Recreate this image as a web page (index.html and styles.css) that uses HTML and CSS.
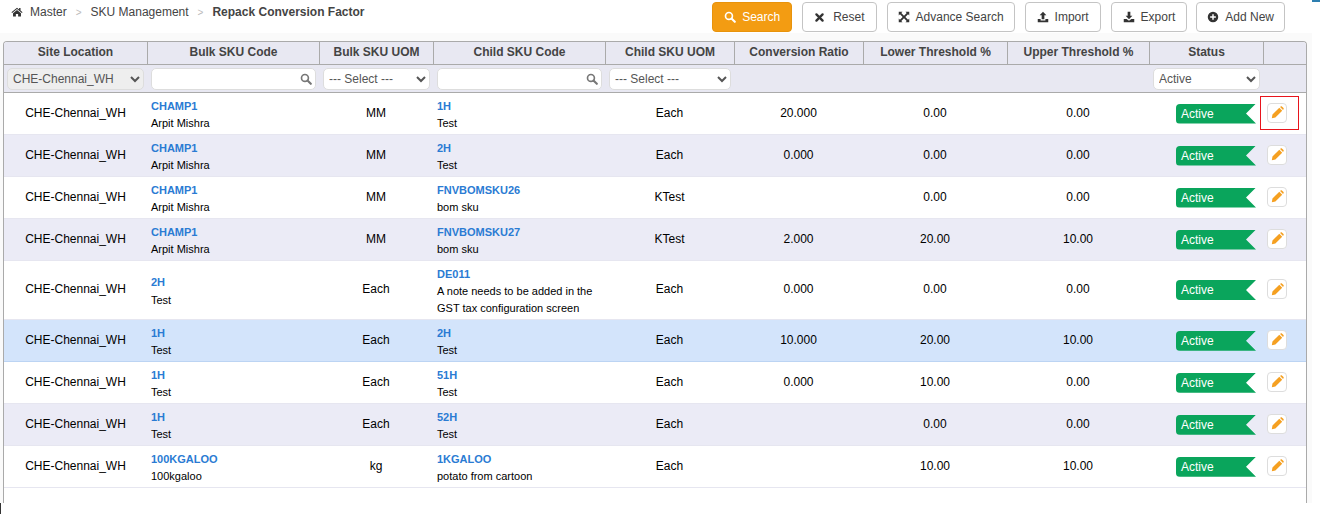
FILE: index.html
```html
<!DOCTYPE html>
<html lang="en">
<head>
<meta charset="utf-8">
<title>Repack Conversion Factor</title>
<link rel="stylesheet" href="styles.css">
</head>
<body>
<svg class="sprite" width="0" height="0" aria-hidden="true">
  <symbol id="i-search" viewBox="0 0 16 16"><circle cx="6.6" cy="6.6" r="4.6" fill="none" stroke="currentColor" stroke-width="2.2"/><path d="M10 10l4.4 4.4" stroke="currentColor" stroke-width="2.8" stroke-linecap="round"/></symbol>
  <symbol id="i-x" viewBox="0 0 16 16"><path d="M3.5 3.5l9 9M12.5 3.5l-9 9" stroke="currentColor" stroke-width="3.4" stroke-linecap="round"/></symbol>
  <symbol id="i-expand" viewBox="0 0 16 16"><path d="M1 1h5L4.4 2.6 8 6.2 11.6 2.6 10 1h5v5l-1.600-1.600L9.800 8l3.600 3.600L15 10v5h-5l1.600-1.600L8 9.800 4.400 13.400 6 15H1v-5l1.600 1.600L6.200 8 2.600 4.400 1 6z" fill="currentColor"/></symbol>
  <symbol id="i-up" viewBox="0 0 16 16"><path d="M8 1l4.500 4.800H9.800V11H6.200V5.800H3.500z" fill="currentColor"/><path d="M1 10.500h3.800v2h6.400v-2H15V15H1z" fill="currentColor"/></symbol>
  <symbol id="i-down" viewBox="0 0 16 16"><path d="M6.200 1h3.600v5.200h2.700L8 11 3.500 6.200h2.700z" fill="currentColor"/><path d="M1 10.500h3.800l3.200 2.500 3.200-2.500H15V15H1z" fill="currentColor"/></symbol>
  <symbol id="i-plus" viewBox="0 0 16 16"><path fill-rule="evenodd" d="M8 1a7 7 0 1 1 0 14A7 7 0 0 1 8 1zM7 4.200v2.800H4.200v2H7v2.800h2V9h2.800V7H9V4.200z" fill="currentColor"/></symbol>
  <symbol id="i-home" viewBox="0 0 16 16"><path d="M8 2.200L.6 8.400l.9 1L8 4l6.500 5.400.9-1-2.700-2.300V2.600h-1.900v1.900z" fill="currentColor"/><path d="M8 5.200l-5.300 4.400V14h3.800v-3.300h3V14h3.800V9.600z" fill="currentColor"/></symbol>
  <symbol id="i-pencil" viewBox="0 0 16 16"><path d="M1 15l.8-4.400 8.400-8.400 3.600 3.600-8.400 8.400zM11.200 1.200l.7-.6c.5-.4 1.100-.4 1.500 0l2 2c.4.400.4 1 0 1.500l-.6.700z" fill="currentColor"/></symbol>
</svg>

<span class="edge-top"></span>
<span class="edge-bottom"></span>

<header class="topbar">
  <nav class="crumbs">
    <svg class="ico home"><use href="#i-home"/></svg>
    <span>Master</span><span class="sep">&gt;</span>
    <span>SKU Management</span><span class="sep">&gt;</span>
    <span class="current">Repack Conversion Factor</span>
  </nav>
  <div class="actions">
    <button class="btn primary"><svg class="ico"><use href="#i-search"/></svg>Search</button>
    <button class="btn reset"><svg class="ico"><use href="#i-x"/></svg>Reset</button>
    <button class="btn"><svg class="ico"><use href="#i-expand"/></svg>Advance Search</button>
    <button class="btn transfer"><svg class="ico"><use href="#i-up"/></svg>Import</button>
    <button class="btn transfer"><svg class="ico"><use href="#i-down"/></svg>Export</button>
    <button class="btn"><svg class="ico"><use href="#i-plus"/></svg>Add New</button>
  </div>
</header>

<main class="panel">
  <div class="grid-wrap">
    <table class="grid">
      <colgroup>
        <col class="c1"><col class="c2"><col class="c3"><col class="c2"><col class="c5"><col class="c5"><col class="c7"><col class="c8"><col class="c3"><col class="c10">
      </colgroup>
      <thead>
        <tr class="heads">
          <th>Site Location</th><th>Bulk SKU Code</th><th>Bulk SKU UOM</th><th>Child SKU Code</th><th>Child SKU UOM</th><th>Conversion Ratio</th><th>Lower Threshold %</th><th>Upper Threshold %</th><th>Status</th><th></th>
        </tr>
        <tr class="filters">
          <th><select class="locked"><option>CHE-Chennai_WH</option></select></th>
          <th><div class="searchbox"><input type="text"><svg class="ico"><use href="#i-search"/></svg></div></th>
          <th><select><option>--- Select ---</option></select></th>
          <th><div class="searchbox"><input type="text"><svg class="ico"><use href="#i-search"/></svg></div></th>
          <th><select><option>--- Select ---</option></select></th>
          <th></th><th></th><th></th>
          <th><select><option>Active</option></select></th>
          <th></th>
        </tr>
      </thead>
      <tbody>
        <tr>
          <td>CHE-Chennai_WH</td><td class="code"><a>CHAMP1</a><span>Arpit Mishra</span></td><td>MM</td><td class="code"><a>1H</a><span>Test</span></td><td>Each</td><td>20.000</td><td>0.00</td><td>0.00</td><td class="st"><span class="badge">Active</span></td>
          <td class="edit"><button class="pen"><svg class="ico"><use href="#i-pencil"/></svg></button><span class="mark"></span></td>
        </tr>
        <tr>
          <td>CHE-Chennai_WH</td><td class="code"><a>CHAMP1</a><span>Arpit Mishra</span></td><td>MM</td><td class="code"><a>2H</a><span>Test</span></td><td>Each</td><td>0.000</td><td>0.00</td><td>0.00</td><td class="st"><span class="badge">Active</span></td>
          <td class="edit"><button class="pen"><svg class="ico"><use href="#i-pencil"/></svg></button></td>
        </tr>
        <tr>
          <td>CHE-Chennai_WH</td><td class="code"><a>CHAMP1</a><span>Arpit Mishra</span></td><td>MM</td><td class="code"><a>FNVBOMSKU26</a><span>bom sku</span></td><td>KTest</td><td></td><td>0.00</td><td>0.00</td><td class="st"><span class="badge">Active</span></td>
          <td class="edit"><button class="pen"><svg class="ico"><use href="#i-pencil"/></svg></button></td>
        </tr>
        <tr>
          <td>CHE-Chennai_WH</td><td class="code"><a>CHAMP1</a><span>Arpit Mishra</span></td><td>MM</td><td class="code"><a>FNVBOMSKU27</a><span>bom sku</span></td><td>KTest</td><td>2.000</td><td>20.00</td><td>10.00</td><td class="st"><span class="badge">Active</span></td>
          <td class="edit"><button class="pen"><svg class="ico"><use href="#i-pencil"/></svg></button></td>
        </tr>
        <tr>
          <td>CHE-Chennai_WH</td><td class="code"><a>2H</a><span>Test</span></td><td>Each</td><td class="code"><a>DE011</a><span>A note needs to be added in the GST tax configuration screen</span></td><td>Each</td><td>0.000</td><td>0.00</td><td>0.00</td><td class="st"><span class="badge">Active</span></td>
          <td class="edit"><button class="pen"><svg class="ico"><use href="#i-pencil"/></svg></button></td>
        </tr>
        <tr class="selected">
          <td>CHE-Chennai_WH</td><td class="code"><a>1H</a><span>Test</span></td><td>Each</td><td class="code"><a>2H</a><span>Test</span></td><td>Each</td><td>10.000</td><td>20.00</td><td>10.00</td><td class="st"><span class="badge">Active</span></td>
          <td class="edit"><button class="pen"><svg class="ico"><use href="#i-pencil"/></svg></button></td>
        </tr>
        <tr>
          <td>CHE-Chennai_WH</td><td class="code"><a>1H</a><span>Test</span></td><td>Each</td><td class="code"><a>51H</a><span>Test</span></td><td>Each</td><td>0.000</td><td>10.00</td><td>0.00</td><td class="st"><span class="badge">Active</span></td>
          <td class="edit"><button class="pen"><svg class="ico"><use href="#i-pencil"/></svg></button></td>
        </tr>
        <tr>
          <td>CHE-Chennai_WH</td><td class="code"><a>1H</a><span>Test</span></td><td>Each</td><td class="code"><a>52H</a><span>Test</span></td><td>Each</td><td></td><td>0.00</td><td>0.00</td><td class="st"><span class="badge">Active</span></td>
          <td class="edit"><button class="pen"><svg class="ico"><use href="#i-pencil"/></svg></button></td>
        </tr>
        <tr>
          <td>CHE-Chennai_WH</td><td class="code"><a>100KGALOO</a><span>100kgaloo</span></td><td>kg</td><td class="code"><a>1KGALOO</a><span>potato from cartoon</span></td><td>Each</td><td></td><td>10.00</td><td>10.00</td><td class="st"><span class="badge">Active</span></td>
          <td class="edit"><button class="pen"><svg class="ico"><use href="#i-pencil"/></svg></button></td>
        </tr>
      </tbody>
    </table>
  </div>
</main>
</body>
</html>
```
FILE: styles.css
```css
* { box-sizing: border-box; }
html, body { margin: 0; padding: 0; background: #fff; }
body {
  width: 1320px;
  height: 514px;
  overflow: hidden;
  position: relative;
  font-family: "Liberation Sans", Arial, sans-serif;
  font-size: 12px;
  color: #000;
}
.sprite { position: absolute; }
.edge-top {
  position: absolute;
  right: 0;
  top: 0;
  width: 8px;
  height: 2px;
  background: #2e7fb0;
}
.edge-bottom {
  position: absolute;
  left: 0;
  top: 503px;
  width: 1px;
  height: 11px;
  background: #333;
}
.ico { width: 12px; height: 12px; display: block; flex: none; }

.topbar {
  height: 33px;
  display: flex;
  justify-content: space-between;
  align-items: flex-start;
  padding: 2px 35px 0 11px;
}
.crumbs {
  display: flex;
  align-items: center;
  height: 20px;
  font-size: 12px;
  color: #444;
}
.crumbs .home { margin-right: 7px; color: #333; }
.sep { color: #bbb; margin: 0 9px; font-size: 10px; }
.current { font-weight: bold; color: #444; }

.actions { display: flex; gap: 10px; }
.btn {
  display: flex;
  align-items: center;
  justify-content: center;
  gap: 6px;
  height: 30px;
  padding: 0 10px;
  border: 1px solid #c4c4c4;
  border-radius: 4px;
  background: #fff;
  color: #444;
  font: 12px "Liberation Sans", Arial, sans-serif;
}
.btn:last-child { margin-left: -1px; }
.btn .ico { color: #333; }
.btn.transfer { padding: 0 11px; }
.btn.reset { padding: 0 11px; gap: 8px; }
.btn.reset .ico { width: 11px; height: 11px; }
.btn.primary {
  padding: 0 11px;
  background: #f39c12;
  border-color: #e8930c;
  color: #fff;
}
.btn.primary .ico { color: #fff; }

.panel {
  width: 1312px;
  height: 470px;
  background: #fafafa;
  padding: 8px 5px 0 3px;
}
.grid-wrap {
  height: 462px;
  width: 1304px;
  border: 1px solid #aaa;
  border-bottom: 0;
  border-radius: 4px 4px 0 0;
  background: #fff;
  overflow: hidden;
}
.grid {
  table-layout: fixed;
  width: 1302px;
  border-collapse: separate;
  border-spacing: 0;
}
.c1 { width: 143px; }
.c2 { width: 172px; }
.c3 { width: 114px; }
.c5 { width: 129px; }
.c7 { width: 144px; }
.c8 { width: 142px; }
.c10 { width: 43px; }

th {
  background: #e8e8f2;
  color: #444;
  font-size: 12px;
  font-weight: bold;
  padding: 0;
  border-bottom: 1px solid #aaa;
}
.heads th { height: 23px; padding-bottom: 2px; border-left: 1px solid #aaa; }
.heads th:first-child { border-left: 0; }
.filters th { height: 28px; padding: 0 3px 0 4px; font-weight: normal; }
.filters th:first-child { padding: 0 3px; }

select, input {
  display: block;
  width: 100%;
  height: 22px;
  border: 1px solid #ddd;
  border-radius: 5px;
  background-color: #fff;
  color: #555;
  font: 12px "Liberation Sans", Arial, sans-serif;
  padding: 0 1px;
}
select.locked { background-color: #eee; }
.searchbox { position: relative; }
.searchbox .ico {
  position: absolute;
  right: 4px;
  top: 5px;
  width: 12px;
  height: 12px;
  color: #777;
}

td {
  height: 42px;
  padding: 3px 4px;
  border-bottom: 1px solid #e6e6f0;
  text-align: center;
  vertical-align: middle;
  line-height: 17.4px;
}
tbody tr:nth-child(even) td { background: #ebebf6; }
tbody tr.selected td { background: #d3e4fb; border-bottom-color: #bcd4f3; }
td.code { text-align: left; padding: 4.5px 4px 1.5px; }
.code a { display: block; color: #2a7bd3; font-weight: bold; font-size: 11px; }
.code span { display: block; font-size: 11px; }

.badge {
  display: block;
  width: 80px;
  height: 20px;
  margin: 0 0 0 27px;
  padding-left: 5px;
  background: #0aa55c;
  color: #fff;
  text-align: left;
  line-height: 20px;
  border-radius: 4px 0 0 4px;
  clip-path: polygon(0 0, 100% 0, 87.500% 50%, 100% 100%, 0 100%);
}
td.st { padding: 3px 0; }
td.edit { position: relative; padding: 2px 0 4px; }
.pen {
  display: flex;
  align-items: center;
  justify-content: center;
  width: 20px;
  height: 20px;
  margin-left: 4px;
  padding: 0;
  border: 1px solid #ddd;
  border-radius: 4px;
  background: #fff;
  color: #f5a021;
}
.pen .ico { width: 13px; height: 13px; }
.mark {
  position: absolute;
  left: -3px;
  top: 3px;
  width: 39px;
  height: 34px;
  border: 1px solid #e8141c;
}
```
